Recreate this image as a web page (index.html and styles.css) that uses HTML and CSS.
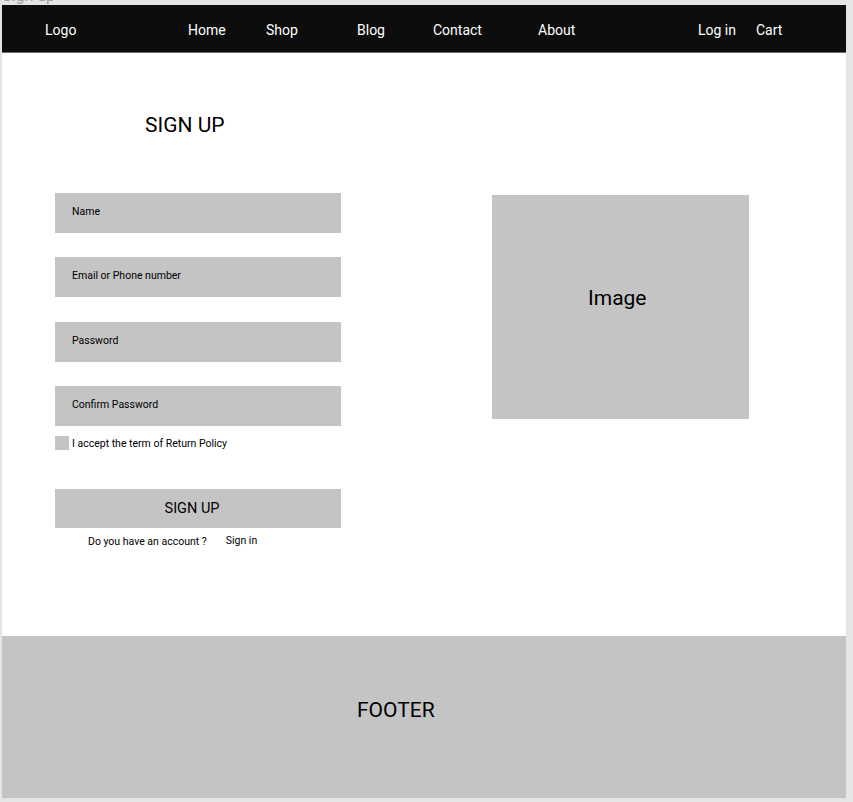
FILE: index.html
```html
<!DOCTYPE html>
<html lang="en">
<head>
    <meta charset="UTF-8">
    <meta name="viewport" content="width=device-width, initial-scale=1.0">
    <title>Sign up</title>
    <link rel="stylesheet" href="styles.css">
</head>
<body>
    <div class="frame-label"><span>Sign up</span></div>
    <div class="frame">
        <nav class="navbar">
            <a href="#">Logo</a>
            <a href="#">Home</a>
            <a href="#">Shop</a>
            <a href="#">Blog</a>
            <a href="#">Contact</a>
            <a href="#">About</a>
            <a href="#">Log in</a>
            <a href="#">Cart</a>
        </nav>

        <main class="content">
            <h1>SIGN UP</h1>
            <div class="columns">
                <form class="signup-form">
                    <div class="field">Name</div>
                    <div class="field">Email or Phone number</div>
                    <div class="field">Password</div>
                    <div class="field">Confirm Password</div>
                    <label class="accept">
                        <span class="box"></span>
                        I accept the term of Return Policy
                    </label>
                    <button type="submit">SIGN UP</button>
                    <div class="have-account">
                        <span>Do you have an account ?</span>
                        <a href="#">Sign in</a>
                    </div>
                </form>
                <div class="image-box">Image</div>
            </div>
        </main>

        <footer class="footer">FOOTER</footer>
    </div>
</body>
</html>
```

FILE: styles.css
```css
body {
    margin: 0;
    background-color: #e5e5e5;
    font-family: Roboto, "Liberation Sans", sans-serif;
    color: #000;
}
.frame-label {
    height: 5px;
    overflow: hidden;
    padding-left: 2px;
    color: #a0a0a0;
    font-size: 16px;
    line-height: 16px;
}
.frame-label span {
    display: block;
    margin-top: -12px;
}
.frame {
    width: 844px;
    margin-left: 2px;
    background: #fff;
}
.navbar {
    display: grid;
    grid-template-columns: 143px 78px 91px 76px 105px 160px 58px auto;
    align-items: center;
    height: 45px;
    padding: 2px 0 0 43px;
    background-color: #0d0d0d;
    border-bottom: 1px solid #6a6a6a;
}
.navbar a {
    color: #fff;
    text-decoration: none;
    font-size: 14px;
}
.content {
    height: 524px;
    padding-top: 59px;
}
h1 {
    margin: 0 0 55px;
    padding-left: 143px;
    font-size: 21px;
    font-weight: normal;
    line-height: 26px;
}
.columns {
    display: flex;
    align-items: flex-start;
}
.signup-form {
    width: 286px;
    margin-left: 53px;
    display: flex;
    flex-direction: column;
}
.field {
    display: flex;
    align-items: center;
    height: 40px;
    padding: 0 0 3px 17px;
    box-sizing: border-box;
    margin-bottom: 24.4px;
    background-color: #c4c4c4;
    font-size: 10.5px;
}
.field:nth-child(4) {
    margin-bottom: 10px;
}
.accept {
    display: flex;
    align-items: center;
    gap: 3px;
    font-size: 10.5px;
    height: 14px;
}
.accept .box {
    width: 14px;
    height: 14px;
    background-color: #c4c4c4;
}
button {
    margin-top: 39px;
    height: 39px;
    padding: 0 12px 0 0;
    border: none;
    background-color: #c4c4c4;
    font-family: inherit;
    font-size: 14.5px;
    color: #000;
}
.have-account {
    display: flex;
    gap: 19px;
    margin-top: 7px;
    padding-left: 33px;
    font-size: 10.5px;
}
.have-account a {
    color: #000;
    text-decoration: none;
    position: relative;
    top: -1px;
}
.image-box {
    width: 257px;
    height: 224px;
    margin-top: 2px;
    margin-left: 151px;
    padding: 91px 0 0 96px;
    box-sizing: border-box;
    background-color: #c4c4c4;
    font-size: 21px;
}
.footer {
    height: 162px;
    padding: 61px 0 0 355px;
    box-sizing: border-box;
    background-color: #c4c4c4;
    font-size: 21px;
    line-height: 26px;
}
```
